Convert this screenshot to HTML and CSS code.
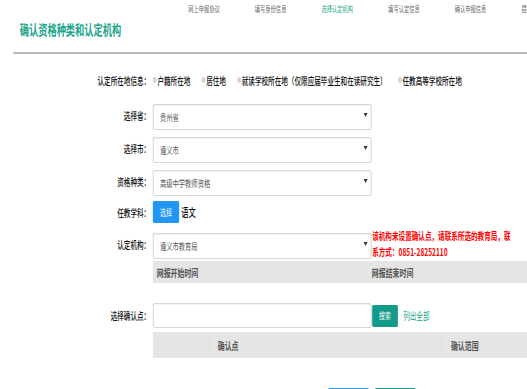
FILE: index.html
```html
<!DOCTYPE html>
<html>
<head>
  <meta charset="UTF-8">
  <title>确认资格种类和认定机构</title>
  <link rel="stylesheet" href="styles.css">
</head>
<body>
  <div class="page">
    <header class="top">
      <ul class="steps">
        <li>网上申报协议</li>
        <li>填写身份信息</li>
        <li class="active">选择认定机构</li>
        <li>填写认定信息</li>
        <li>确认申报信息</li>
        <li>提交申报信息</li>
      </ul>
      <h1 class="title">确认资格种类和认定机构</h1>
    </header>

    <form class="form">
      <div class="row row-radio">
        <span class="label">认定所在地信息：</span>
        <label class="opt"><input type="radio" name="area">户籍所在地</label>
        <label class="opt"><input type="radio" name="area">居住地</label>
        <label class="opt"><input type="radio" name="area">就读学校所在地（仅限应届毕业生和在读研究生）</label>
        <label class="opt"><input type="radio" name="area">任教高等学校所在地</label>
      </div>

      <div class="row">
        <span class="label">选择省：</span>
        <div class="select">
          <select><option>贵州省</option></select>
        </div>
      </div>

      <div class="row">
        <span class="label">选择市：</span>
        <div class="select">
          <select><option>遵义市</option></select>
        </div>
      </div>

      <div class="row">
        <span class="label">资格种类：</span>
        <div class="select">
          <select><option>高级中学教师资格</option></select>
        </div>
      </div>

      <div class="row row-subject">
        <span class="label">任教学科：</span>
        <button type="button" class="btn btn-pick">选择</button>
        <span class="subject">语文</span>
      </div>

      <div class="row row-org">
        <span class="label">认定机构：</span>
        <div class="select">
          <select><option>遵义市教育局</option></select>
        </div>
        <p class="note">该机构未设置确认点，请联系所选的教育局，联系方式：0851-28252110</p>
      </div>

      <table class="grid grid-time">
        <tr>
          <th class="c-start">网报开始时间</th>
          <th>网报结束时间</th>
        </tr>
      </table>

      <div class="row row-search">
        <span class="label">选择确认点：</span>
        <input type="text" class="text-input">
        <button type="button" class="btn btn-search">搜索</button>
        <a href="#" class="list-all">列出全部</a>
      </div>

      <table class="grid grid-point">
        <tr>
          <th class="c-check"></th>
          <th class="c-point">确认点</th>
          <th>确认范围</th>
        </tr>
      </table>

      <div class="actions">
        <button type="button" class="btn btn-prev">上一步</button>
        <button type="button" class="btn btn-next">下一步</button>
      </div>
    </form>
  </div>
</body>
</html>
```

FILE: styles.css
```css
* {
  box-sizing: border-box;
}

html,
body {
  margin: 0;
  overflow: hidden;
  background: #fff;
  font-family: "Noto Sans CJK SC", "Liberation Sans", sans-serif;
  color: #333;
}

/* page is laid out 800px wide and squeezed into the window */
.page {
  width: 800px;
  transform: scaleX(0.65875);
  transform-origin: 0 0;
}

.top {
  margin-left: 20px;
  padding-bottom: 12px;
  border-bottom: 2px solid #b9b9b9;
}

.steps {
  display: flex;
  height: 18px;
  margin: 0 0 0 239px;
  padding: 0;
  list-style: none;
}

.steps li {
  flex: 0 0 101.2px;
  text-align: center;
  font-size: 8px;
  line-height: 18px;
  color: #666;
  white-space: nowrap;
}

.steps li.active {
  color: #1aa58a;
}

.title {
  margin: 0 0 0 10px;
  font-size: 14px;
  line-height: 22px;
  color: #1aa58a;
}

.form {
  padding-top: 16px;
}

.row {
  display: flex;
  align-items: center;
  height: 26px;
  margin-bottom: 7px;
}

.label {
  flex: none;
  width: 232px;
  padding-right: 4px;
  text-align: right;
  font-size: 10px;
  font-weight: 500;
  color: #111;
}

.row-radio {
  height: 20px;
  margin-bottom: 12px;
}

.opt {
  display: flex;
  align-items: center;
  margin-right: 17px;
  font-size: 10px;
  font-weight: 500;
  color: #111;
  white-space: nowrap;
}

.opt input {
  -webkit-appearance: none;
  appearance: none;
  width: 6px;
  height: 6px;
  margin: 0 1px 0 0;
  border-radius: 50%;
  background: #d6d6d6;
}

.select {
  position: relative;
  flex: none;
  width: 332px;
  height: 26px;
}

.select select {
  -webkit-appearance: none;
  appearance: none;
  width: 100%;
  height: 100%;
  padding: 0 0 0 10px;
  border: 1px solid #cfcfcf;
  border-radius: 2px;
  background: #fff;
  box-shadow: inset 0 1px 1px rgba(0, 0, 0, 0.06);
  font-family: inherit;
  font-size: 9.5px;
  color: #555;
}

.select::after {
  content: "";
  position: absolute;
  right: 6px;
  top: 11px;
  border: 3px solid transparent;
  border-top: 4px solid #333;
  border-bottom: 0;
}

.btn {
  border: 0;
  border-radius: 2px;
  color: #fff;
  font-family: inherit;
  cursor: pointer;
}

.row-subject {
  height: 22px;
  margin-bottom: 8px;
}

.btn-pick {
  width: 40px;
  height: 22px;
  padding: 0;
  background: #2196f3;
  font-size: 9px;
}

.subject {
  margin-left: 3px;
  font-size: 11px;
  font-weight: 500;
  color: #111;
}

.row-org {
  margin-bottom: 4px;
}

.note {
  width: 216px;
  margin: 0 0 0 1px;
  font-size: 10px;
  font-weight: bold;
  line-height: 16.5px;
  color: #f00;
}

.grid {
  margin-left: 232px;
  width: 600px;
  border-collapse: collapse;
  background: #e5e5e5;
}

.grid th {
  padding: 0 0 0 6px;
  text-align: left;
  font-size: 10.5px;
  font-weight: bold;
  color: #555;
}

.grid th + th {
  border-left: 1px solid #efefef;
}

.grid-time th {
  height: 22px;
}

.grid-time .c-start {
  width: 326px;
}

.row-search {
  height: 25px;
  margin: 20px 0 4px;
}

.text-input {
  flex: none;
  width: 332px;
  height: 25px;
  border: 1px solid #cfcfcf;
  border-radius: 2px;
  box-shadow: inset 0 1px 1px rgba(0, 0, 0, 0.06);
}

.btn-search {
  width: 39px;
  height: 22px;
  margin-left: 1px;
  padding: 0;
  background: #149a88;
  font-size: 9px;
}

.list-all {
  margin-left: 8px;
  font-size: 10px;
  color: #26a68b;
  text-decoration: none;
}

.grid-point th {
  height: 26px;
}

.grid-point .c-check {
  width: 92px;
}

.grid-point .c-point {
  width: 354px;
}

.actions {
  display: flex;
  gap: 9px;
  margin: 30px 0 0 498px;
}

.actions .btn {
  width: 62px;
  height: 28px;
  font-size: 10px;
}

.btn-prev {
  background: #2d9cf0;
}

.btn-next {
  background: #149a88;
}
```
